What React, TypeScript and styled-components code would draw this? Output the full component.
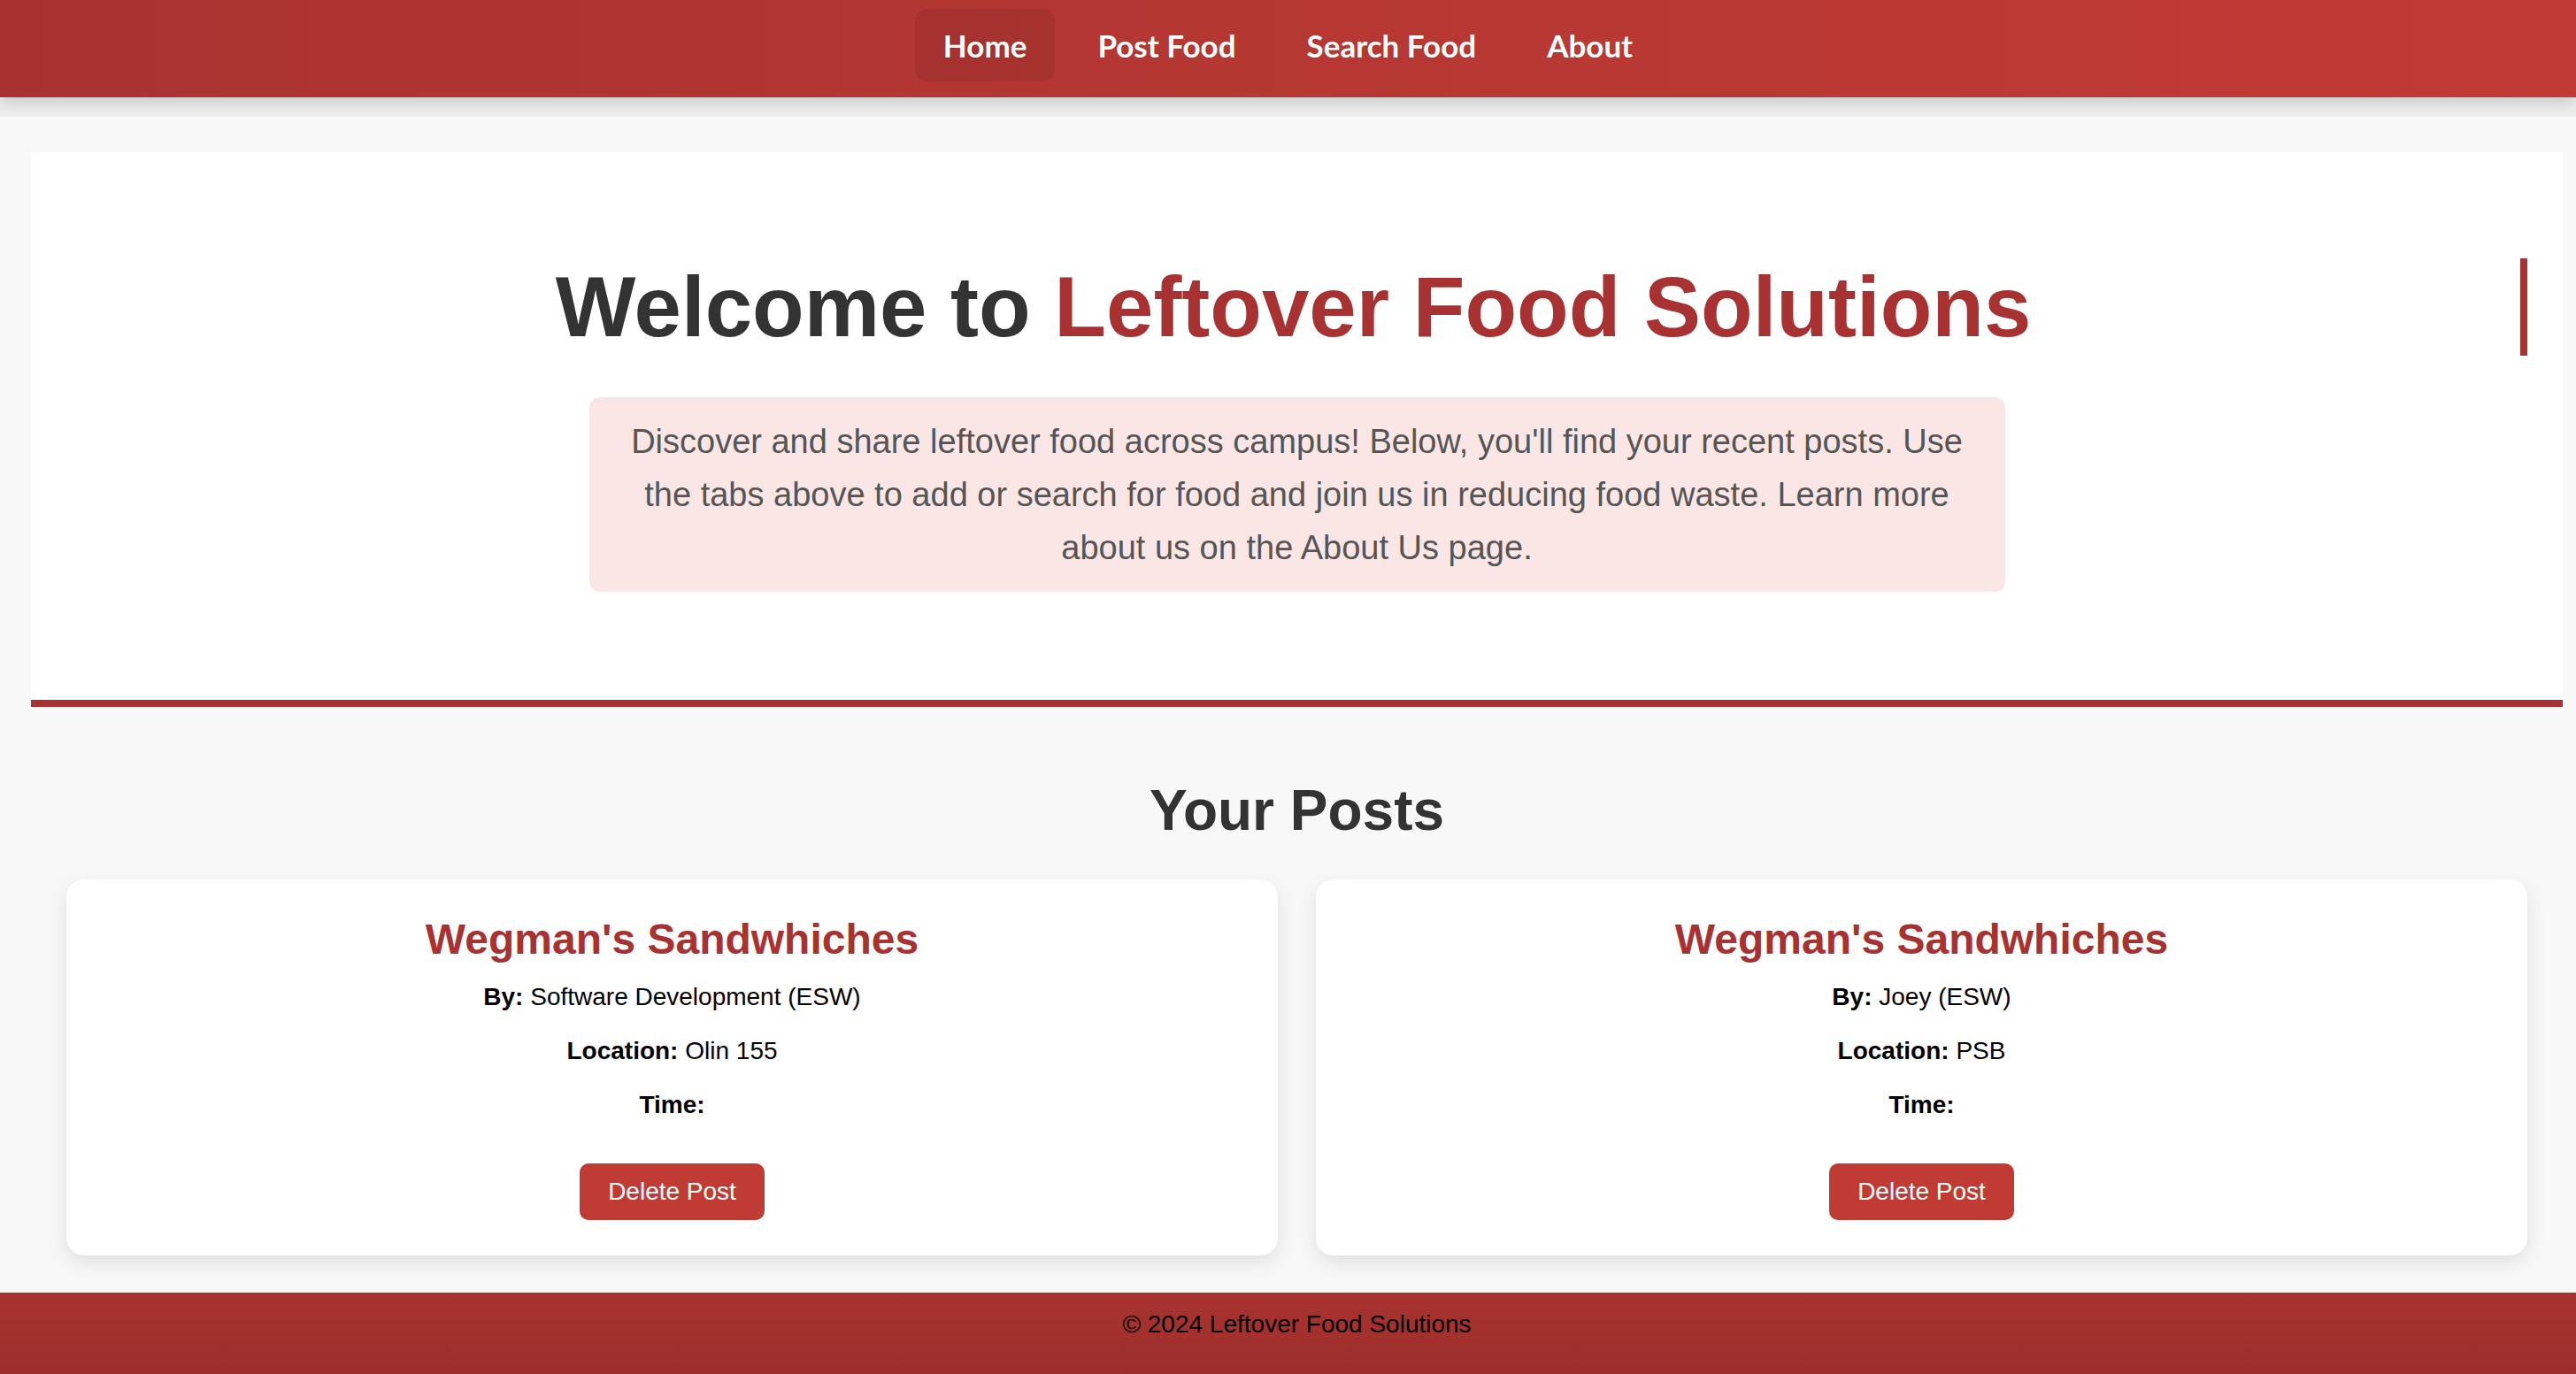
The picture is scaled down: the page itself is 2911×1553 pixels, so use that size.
import React from "react";
import styled, { createGlobalStyle } from "styled-components";

const GlobalStyle = createGlobalStyle`
  html, body {
    margin: 0;
    padding: 0;
    background: #eeeeee;
    font-family: "Liberation Sans", Arial, Helvetica, sans-serif;
  }
  * { box-sizing: border-box; }
`;

const NavBar = styled.nav`
  height: 110px;
  padding-top: 10px;
  margin-bottom: 22px;
  display: flex;
  justify-content: center;
  align-items: flex-start;
  gap: 16px;
  background: linear-gradient(90deg, #a93230 0%, #b73833 55%, #c23a34 100%);
  box-shadow: 0 6px 16px rgba(0, 0, 0, 0.16);
  position: relative;
  z-index: 2;
`;

const NavLink = styled.a<{ $active?: boolean }>`
  display: block;
  padding: 20px 32px;
  border-radius: 14px;
  font-family: Lato, "Open Sans", sans-serif;
  font-weight: 700;
  font-size: 35px;
  line-height: 42px;
  color: #ffffff;
  text-decoration: none;
  background: ${(p) => (p.$active ? "rgba(0, 0, 0, 0.07)" : "transparent")};
  cursor: pointer;
`;

const Main = styled.main`
  background: #f8f8f8;
  padding: 40px 15px 42px 35px;
`;

const Hero = styled.section`
  background: #ffffff;
  border-bottom: 8px solid #a83232;
  padding: 120px 40px 122px;
  text-align: center;
`;

const Title = styled.h1`
  margin: 0 0 47px;
  font-size: 96px;
  line-height: 110px;
  font-weight: 700;
  color: #333333;
  border-right: 8px solid #a83232;
`;

const Accent = styled.span`
  color: #a83232;
`;

const Intro = styled.p`
  max-width: 1600px;
  margin: 0 auto;
  padding: 20px 40px;
  background: #fbe6e6;
  border-radius: 12px;
  font-size: 38px;
  line-height: 60px;
  color: #555555;
`;

const PostsSection = styled.section`
  padding: 80px 40px 0;
`;

const SectionTitle = styled.h2`
  margin: 0;
  text-align: center;
  font-size: 64px;
  line-height: 74px;
  font-weight: 700;
  color: #333333;
`;

const PostGrid = styled.div`
  margin-top: 41px;
  display: grid;
  grid-template-columns: 1fr 1fr;
  gap: 43px;
`;

const Card = styled.article`
  background: #ffffff;
  border-radius: 20px;
  box-shadow: 0 8px 22px rgba(0, 0, 0, 0.1);
  padding: 40px;
  display: flex;
  flex-direction: column;
  align-items: center;
  text-align: center;
`;

const CardTitle = styled.h3`
  margin: 0 0 20px;
  font-size: 48px;
  line-height: 56px;
  font-weight: 700;
  color: #a83232;
`;

const Field = styled.p`
  margin: 0;
  font-size: 28px;
  line-height: 34px;
  color: #000000;
  & + & {
    margin-top: 27px;
  }
`;

const DeleteButton = styled.button`
  margin-top: 49px;
  padding: 16px 32px;
  border: none;
  border-radius: 10px;
  background: #c13b35;
  color: #ffffff;
  font-family: "Liberation Sans", Arial, sans-serif;
  font-size: 28px;
  line-height: 32px;
  cursor: pointer;
`;

const Footer = styled.footer`
  background: linear-gradient(180deg, #a93330 0%, #9c2e2b 100%);
  padding: 20px 0 41px 20px;
  text-align: center;
  font-size: 28px;
  line-height: 32px;
  color: #000000;
`;

type Post = { title: string; by: string; location: string; time: string };

const posts: Post[] = [
  { title: "Wegman's Sandwhiches", by: "Software Development (ESW)", location: "Olin 155", time: "" },
  { title: "Wegman's Sandwhiches", by: "Joey (ESW)", location: "PSB", time: "" },
];

export default function App() {
  return (
    <>
      <GlobalStyle />
      <NavBar>
        <NavLink $active>Home</NavLink>
        <NavLink>Post Food</NavLink>
        <NavLink>Search Food</NavLink>
        <NavLink>About</NavLink>
      </NavBar>
      <Main>
        <Hero>
          <Title>
            Welcome to <Accent>Leftover Food Solutions</Accent>
          </Title>
          <Intro>
            Discover and share leftover food across campus! Below, you'll find your recent posts. Use the tabs
            above to add or search for food and join us in reducing food waste. Learn more about us on the About
            Us page.
          </Intro>
        </Hero>
        <PostsSection>
          <SectionTitle>Your Posts</SectionTitle>
          <PostGrid>
            {posts.map((p, i) => (
              <Card key={i}>
                <CardTitle>{p.title}</CardTitle>
                <Field>
                  <strong>By:</strong> {p.by}
                </Field>
                <Field>
                  <strong>Location:</strong> {p.location}
                </Field>
                <Field>
                  <strong>Time:</strong> {p.time}
                </Field>
                <DeleteButton>Delete Post</DeleteButton>
              </Card>
            ))}
          </PostGrid>
        </PostsSection>
      </Main>
      <Footer>© 2024 Leftover Food Solutions</Footer>
    </>
  );
}
